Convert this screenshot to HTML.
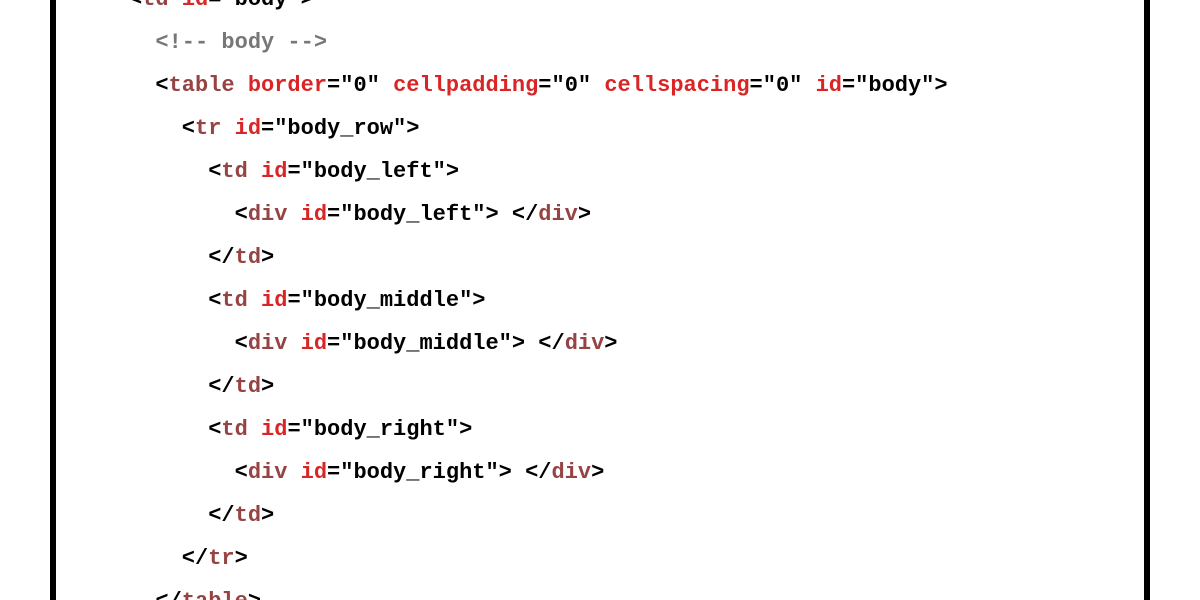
<!DOCTYPE html>
<html><head><style>
html,body{margin:0;padding:0;background:#fff;width:1200px;height:600px;overflow:hidden;position:relative}
.bl{position:absolute;top:0;left:50px;width:6px;height:600px;background:#000}
.br{position:absolute;top:0;left:1144px;width:6px;height:600px;background:#000}
pre{position:absolute;left:129px;top:-22px;margin:0;font-family:"Liberation Mono","DejaVu Sans Mono",monospace;font-weight:bold;font-size:22px;line-height:43px;color:#000}
.t{color:#964343}.a{color:#d92525}.c{color:#777}
</style></head><body>
<div class="bl"></div><div class="br"></div>
<pre>&lt;<span class="t">td</span> <span class="a">id</span>="body"&gt;
  <span class="c">&lt;!-- body --&gt;</span>
  &lt;<span class="t">table</span> <span class="a">border</span>="0" <span class="a">cellpadding</span>="0" <span class="a">cellspacing</span>="0" <span class="a">id</span>="body"&gt;
    &lt;<span class="t">tr</span> <span class="a">id</span>="body_row"&gt;
      &lt;<span class="t">td</span> <span class="a">id</span>="body_left"&gt;
        &lt;<span class="t">div</span> <span class="a">id</span>="body_left"&gt; &lt;/<span class="t">div</span>&gt;
      &lt;/<span class="t">td</span>&gt;
      &lt;<span class="t">td</span> <span class="a">id</span>="body_middle"&gt;
        &lt;<span class="t">div</span> <span class="a">id</span>="body_middle"&gt; &lt;/<span class="t">div</span>&gt;
      &lt;/<span class="t">td</span>&gt;
      &lt;<span class="t">td</span> <span class="a">id</span>="body_right"&gt;
        &lt;<span class="t">div</span> <span class="a">id</span>="body_right"&gt; &lt;/<span class="t">div</span>&gt;
      &lt;/<span class="t">td</span>&gt;
    &lt;/<span class="t">tr</span>&gt;
  &lt;/<span class="t">table</span>&gt;</pre>
</body></html>
